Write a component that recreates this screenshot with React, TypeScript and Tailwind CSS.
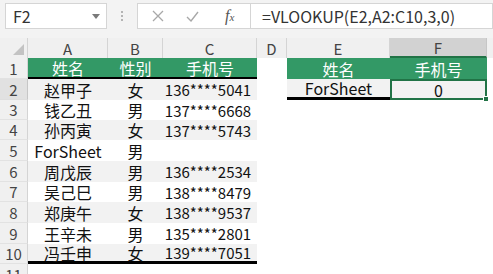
import React from "react";

const cols = ["A", "B", "C", "D", "E", "F"];
const rowH = [21, 21, 20, 20, 21, 21, 20, 21, 21, 20, 21];

const data = [
  ["赵甲子", "女", "136****5041"],
  ["钱乙丑", "男", "137****6668"],
  ["孙丙寅", "女", "137****5743"],
  ["ForSheet", "男", ""],
  ["周戊辰", "男", "136****2534"],
  ["吴己巳", "男", "138****8479"],
  ["郑庚午", "女", "138****9537"],
  ["王辛未", "男", "135****2801"],
  ["冯壬申", "女", "139****7051"],
];

const grid = "grid grid-cols-[28px_80px_55px_94px_30px_103px_97px_1fr]";

function Toolbar() {
  return (
    <div className="h-[38px] bg-[#f3f3f3] flex items-start pt-[3px] pl-[5px]">
      <div className="w-[102px] h-[26px] bg-white border border-[#d5d5d5] flex items-center justify-between pl-[7px] pr-[6px] text-[16px] leading-none text-[#333]">
        <span>F2</span>
        <svg width="8" height="5" viewBox="0 0 8 5">
          <path d="M0 0h8L4 5z" fill="#7a7a7a" />
        </svg>
      </div>
      <div className="w-[30px] h-[26px] flex flex-col items-center justify-center gap-[2px]">
        <span className="w-[2px] h-[2px] bg-[#b4b4b4]" />
        <span className="w-[2px] h-[2px] bg-[#b4b4b4]" />
        <span className="w-[2px] h-[2px] bg-[#b4b4b4]" />
      </div>
      <div className="w-[113px] h-[26px] bg-white border border-[#d5d5d5] border-r-0 flex items-center">
        <svg width="12" height="12" viewBox="0 0 12 12" className="ml-[14px]">
          <path d="M1 1l10 10M11 1L1 11" stroke="#a8a8a8" strokeWidth="1.3" />
        </svg>
        <svg width="13" height="11" viewBox="0 0 13 11" className="ml-[22px]">
          <path d="M1 6l4 4 7-9" stroke="#a8a8a8" strokeWidth="1.4" fill="none" />
        </svg>
        <span className="ml-[26px] text-[16px] italic text-[#555] font-['Liberation_Serif',serif] leading-none">
          f<span className="text-[11px]">x</span>
        </span>
      </div>
      <div className="flex-1 h-[26px] bg-white border border-[#d5d5d5] flex items-center pl-[11px] text-[16px] leading-none text-[#333]">
        =VLOOKUP(E2,A2:C10,3,0)
      </div>
    </div>
  );
}

function ColHeader() {
  return (
    <div className={`${grid} h-[20px] bg-[#f0f0f0] text-[15px] leading-none text-[#444]`}>
      <div className="relative border-r border-[#d4d4d4]">
        <svg width="11" height="11" viewBox="0 0 11 11" className="absolute right-[3px] bottom-[3px]">
          <path d="M11 0v11H0z" fill="#c3c3c3" />
        </svg>
      </div>
      {cols.map((c) => (
        <div
          key={c}
          className={
            c === "F"
              ? "flex items-center justify-center bg-[#d2d2d2] border-r border-[#c6c6c6] border-b-2 border-b-[#217346]"
              : "flex items-center justify-center border-r border-[#d4d4d4]"
          }
        >
          {c}
        </div>
      ))}
      <div />
    </div>
  );
}

function Cell({ children, className = "" }: { children?: React.ReactNode; className?: string }) {
  return <div className={`flex items-center justify-center whitespace-nowrap leading-none ${className}`}>{children}</div>;
}

export default function App() {
  return (
    <div className="w-[493px] h-[274px] overflow-hidden bg-white font-['Noto_Sans_CJK_SC',sans-serif]">
      <Toolbar />
      <ColHeader />
      {rowH.map((h, i) => {
        const r = i + 1;
        const shade = r % 2 === 0 && r <= 10 ? "bg-[#f2f2f2]" : "";
        const d = r >= 2 && r <= 10 ? data[r - 2] : null;
        const lastBorder = r === 10 ? "border-b-[3px] border-black" : "";
        const firstBorder = r === 1 ? "border-b-[2px] border-black" : "";
        return (
          <div key={r} className={`${grid} text-[16px] text-[#111]`} style={{ height: h }}>
            <Cell
              className={
                r === 2
                  ? "bg-[#e1e1e1] text-[#444] text-[15px] border-r border-[#c6c6c6] border-b border-b-[#dedede]"
                  : "bg-[#f0f0f0] text-[#444] text-[15px] border-r border-[#d4d4d4] border-b border-b-[#e2e2e2]"
              }
            >
              {r}
            </Cell>
            {r === 1 ? (
              <>
                <Cell className={`bg-[#339966] text-white ${firstBorder}`}>姓名</Cell>
                <Cell className={`bg-[#339966] text-white ${firstBorder}`}>性别</Cell>
                <Cell className={`bg-[#339966] text-white ${firstBorder}`}>手机号</Cell>
              </>
            ) : d ? (
              <>
                <Cell className={`${shade} ${lastBorder}`}>{d[0]}</Cell>
                <Cell className={`${shade} ${lastBorder}`}>{d[1]}</Cell>
                <Cell className={`${shade} ${lastBorder} text-[15px] pr-[4px]`}>{d[2]}</Cell>
              </>
            ) : (
              <>
                <Cell />
                <Cell />
                <Cell />
              </>
            )}
            <Cell />
            {r === 1 ? (
              <>
                <Cell className="bg-[#339966] text-white">姓名</Cell>
                <Cell className="bg-[#339966] text-white">手机号</Cell>
              </>
            ) : r === 2 ? (
              <>
                <Cell className="bg-[#f2f2f2] border-b-[3px] border-black">ForSheet</Cell>
                <Cell className="relative bg-[#f2f2f2] border-2 border-[#217346]">
                  0
                  <span className="absolute right-[-4px] bottom-[-4px] w-[6px] h-[6px] bg-[#217346] border border-white" />
                </Cell>
              </>
            ) : (
              <>
                <Cell />
                <Cell />
              </>
            )}
            <Cell />
          </div>
        );
      })}
    </div>
  );
}
